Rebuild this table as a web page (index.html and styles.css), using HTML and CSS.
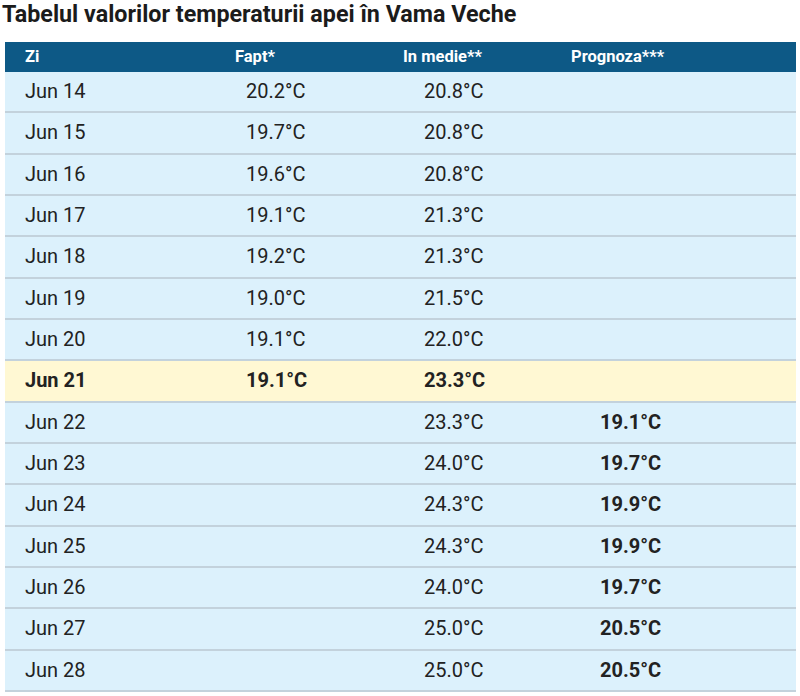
FILE: index.html
```html
<!DOCTYPE html>
<html lang="ro">
<head>
<meta charset="utf-8">
<title>Tabelul valorilor temperaturii apei în Vama Veche</title>
<link rel="stylesheet" href="styles.css">
</head>
<body>
<div class="page">
  <h2 class="title">Tabelul valorilor temperaturii apei în Vama Veche</h2>
  <table class="temps">
    <colgroup>
      <col class="c1"><col class="c2"><col class="c3"><col class="c4">
    </colgroup>
    <thead>
      <tr><th>Zi</th><th>Fapt*</th><th>In medie**</th><th>Prognoza***</th></tr>
    </thead>
    <tbody>
      <tr><td>Jun 14</td><td>20.2°C</td><td>20.8°C</td><td></td></tr>
      <tr><td>Jun 15</td><td>19.7°C</td><td>20.8°C</td><td></td></tr>
      <tr><td>Jun 16</td><td>19.6°C</td><td>20.8°C</td><td></td></tr>
      <tr><td>Jun 17</td><td>19.1°C</td><td>21.3°C</td><td></td></tr>
      <tr><td>Jun 18</td><td>19.2°C</td><td>21.3°C</td><td></td></tr>
      <tr><td>Jun 19</td><td>19.0°C</td><td>21.5°C</td><td></td></tr>
      <tr><td>Jun 20</td><td>19.1°C</td><td>22.0°C</td><td></td></tr>
      <tr class="today"><td>Jun 21</td><td>19.1°C</td><td>23.3°C</td><td></td></tr>
      <tr><td>Jun 22</td><td></td><td>23.3°C</td><td class="fc">19.1°C</td></tr>
      <tr><td>Jun 23</td><td></td><td>24.0°C</td><td class="fc">19.7°C</td></tr>
      <tr><td>Jun 24</td><td></td><td>24.3°C</td><td class="fc">19.9°C</td></tr>
      <tr><td>Jun 25</td><td></td><td>24.3°C</td><td class="fc">19.9°C</td></tr>
      <tr><td>Jun 26</td><td></td><td>24.0°C</td><td class="fc">19.7°C</td></tr>
      <tr><td>Jun 27</td><td></td><td>25.0°C</td><td class="fc">20.5°C</td></tr>
      <tr><td>Jun 28</td><td></td><td>25.0°C</td><td class="fc">20.5°C</td></tr>
    </tbody>
  </table>
</div>
</body>
</html>
```
FILE: styles.css
```css
html, body {
  margin: 0;
  padding: 0;
  background: #ffffff;
}
body {
  font-family: Roboto, "Liberation Sans", Arial, sans-serif;
  color: #222222;
}
.page {
  padding: 0 4px 0 0;
}
.title {
  margin: 0 0 14px 2px;
  font-size: 23.3px;
  line-height: 28px;
  font-weight: 700;
  color: #1b1b1b;
}
.temps {
  margin-left: 5px;
  width: 791px;
  border-collapse: collapse;
  table-layout: fixed;
}
.c1 { width: 210px; }
.c2 { width: 168px; }
.c3 { width: 168px; }
.c4 { width: 245px; }
.temps th {
  background: #0d5986;
  color: #ffffff;
  font-size: 16.5px;
  font-weight: 700;
  text-align: left;
  height: 30px;
  padding: 0 0 0 20px;
  line-height: 30px;
}
.temps td {
  background: #dcf1fc;
  font-size: 20px;
  line-height: 23.33px;
  padding: 8px 0 8px 20px;
  border-bottom: 2px solid #c3d2dc;
  color: #222222;
  white-space: nowrap;
}
.temps td:nth-child(2) { padding-left: 31px; }
.temps td:nth-child(3) { padding-left: 41px; }
.temps td:nth-child(4) { padding-left: 49px; }
.temps tr.today td {
  background: #fff8d3;
  font-weight: 700;
}
.temps td.fc {
  font-weight: 700;
}
```
